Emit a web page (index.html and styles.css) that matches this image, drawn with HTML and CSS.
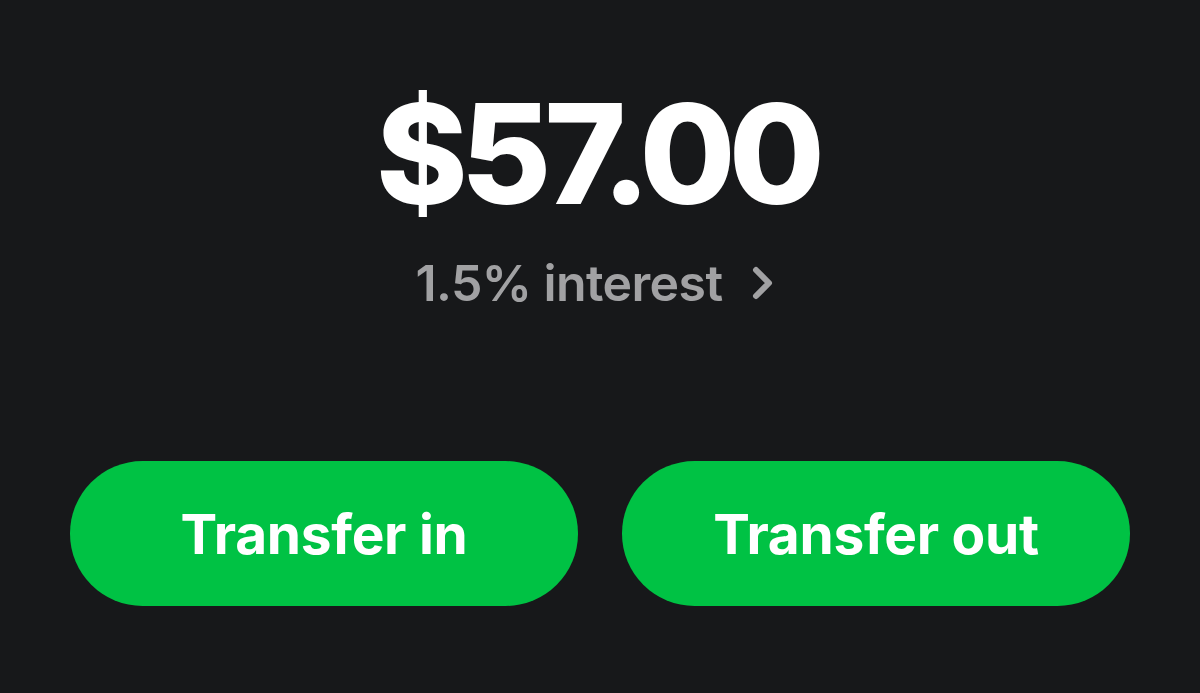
FILE: index.html
```html
<!DOCTYPE html>
<html>
<head>
<meta charset="utf-8">
<link rel="stylesheet" href="styles.css">
</head>
<body>
<main class="screen">
  <section class="balance">
    <div class="amount">$57.00</div>
    <div class="interest">
      <span>1.5% interest</span>
      <svg class="chev" width="26" height="40" viewBox="0 0 26 40"><path d="M6 7 L19 20 L6 33" fill="none" stroke="#a1a1a3" stroke-width="6" stroke-linecap="round" stroke-linejoin="round"/></svg>
    </div>
  </section>
  <section class="actions">
    <button class="btn">Transfer in</button>
    <button class="btn">Transfer out</button>
  </section>
</main>
</body>
</html>
```

FILE: styles.css
```css
html, body {
  margin: 0;
  padding: 0;
  background: #17181a;
}
.screen {
  width: 1200px;
  height: 693px;
  display: flex;
  flex-direction: column;
  align-items: center;
  font-family: Inter, "Noto Sans", sans-serif;
}
.balance {
  display: flex;
  flex-direction: column;
  align-items: center;
  padding-top: 79px;
}
.amount {
  color: #ffffff;
  font-size: 139px;
  font-weight: 800;
  line-height: 150px;
  letter-spacing: -7px;
  padding-right: 6px;
}
.interest {
  display: flex;
  align-items: center;
  gap: 28px;
  margin-top: 26px;
  padding-right: 8px;
  color: #a1a1a3;
  font-size: 50px;
  font-weight: 600;
  line-height: 56px;
  letter-spacing: -0.6px;
}
.chev { display: block; }
.actions {
  margin-top: 150px;
  width: 1060px;
  display: flex;
  gap: 44px;
}
.btn {
  flex: 1;
  height: 145px;
  border: none;
  border-radius: 73px;
  background: #00c244;
  color: #ffffff;
  font-family: Inter, "Noto Sans", sans-serif;
  font-size: 55px;
  font-weight: 700;
  padding: 0;
  letter-spacing: -0.3px;
}
```
